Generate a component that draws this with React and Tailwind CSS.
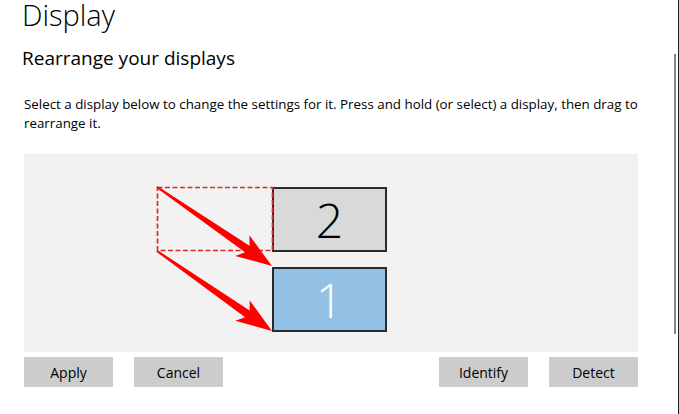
import React from 'react';

const arrowPoints = (x1, y1, x2, y2) => {
  const dx = x2 - x1;
  const dy = y2 - y1;
  const len = Math.hypot(dx, dy);
  const ux = dx / len, uy = dy / len;
  const nx = -uy, ny = ux;
  const bx = x2 - 30 * ux, by = y2 - 30 * uy;
  const wx = x2 - 36 * ux, wy = y2 - 36 * uy;
  const p = [
    [x1 + 1 * nx, y1 + 1 * ny],
    [bx + 4 * nx, by + 4 * ny],
    [wx + 12.5 * nx, wy + 12.5 * ny],
    [x2, y2],
    [wx - 12.5 * nx, wy - 12.5 * ny],
    [bx - 4 * nx, by - 4 * ny],
    [x1 - 1 * nx, y1 - 1 * ny],
  ];
  return p.map(([a, b]) => `${a.toFixed(1)},${b.toFixed(1)}`).join(' ');
};

const Button = ({ children }) => (
  <button className="w-[89px] h-[30px] bg-[#cccccc] text-[14px] text-black">{children}</button>
);

const App = () => {
  return (
    <div className="relative w-[679px] h-[414px] overflow-hidden bg-white text-black" style={{ fontFamily: '"Open Sans", "Noto Sans", sans-serif' }}>
      {/* scrollbar */}
      <div className="absolute top-0 right-0 h-full w-px bg-[#1f1f1f]" />
      <div className="absolute top-[54px] right-[3px] h-[280px] w-[2px] bg-[#858585]" />

      <div className="pl-[22px] pr-[41px]">
        <h1 className="text-[29px] font-light leading-[30px]">Display</h1>
        <h2 className="text-[19px] leading-[26px] mt-[15px]">Rearrange your displays</h2>
        <p className="text-[13.35px] leading-[19px] mt-[24px] pl-[2px] whitespace-nowrap">
          Select a display below to change the settings for it. Press and hold (or select) a display, then drag to
          <br />
          rearrange it.
        </p>

        {/* arrangement canvas */}
        <div className="relative ml-[2px] mt-[21px] w-[614px] h-[198px] bg-[#f2f2f2]">
          <div className="absolute left-[248px] top-[33px] w-[115px] h-[65px] bg-[#d9d9d9] border-2 border-[#2b2b2b] flex items-center justify-center">
            <span className="text-[48px] font-light leading-none">2</span>
          </div>
          <div className="absolute left-[248px] top-[113px] w-[115px] h-[65px] bg-[#93c1e6] border-2 border-[#2b2b2b] flex items-center justify-center">
            <span className="text-[48px] font-light leading-none text-white">1</span>
          </div>
          <svg className="absolute inset-0" width="614" height="198" viewBox="0 0 614 198">
            <rect x="133.5" y="33.5" width="115" height="63" fill="none" stroke="#d92b2b" strokeWidth="1.7" strokeDasharray="5 2.5" />
            <polygon points={arrowPoints(133, 33, 248, 112)} fill="#ff0000" />
            <polygon points={arrowPoints(133, 97, 248, 177)} fill="#ff0000" />
          </svg>
        </div>

        <div className="flex items-center ml-[2px] mt-[5px] w-[614px]">
          <Button>Apply</Button>
          <div className="ml-[21px]"><Button>Cancel</Button></div>
          <div className="ml-auto"><Button>Identify</Button></div>
          <div className="ml-[21px]"><Button>Detect</Button></div>
        </div>
      </div>
    </div>
  );
};

export default App;
